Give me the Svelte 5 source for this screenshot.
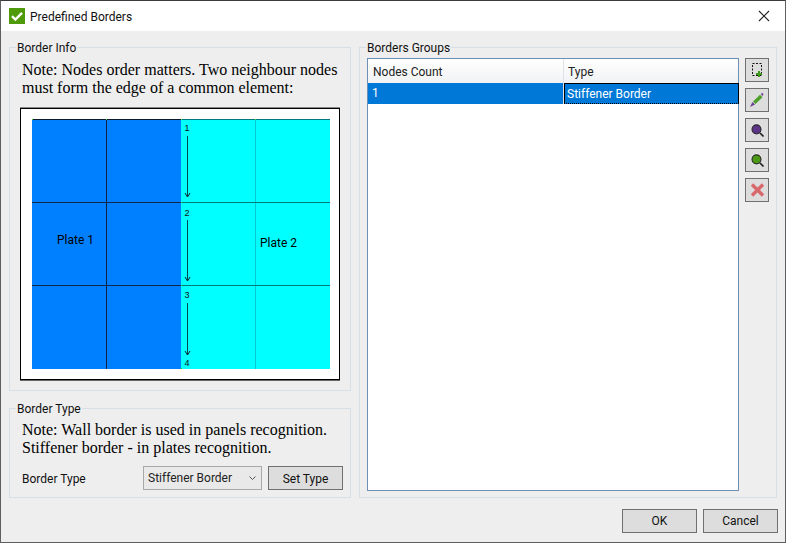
<script>
    const groups = [{ count: 1, type: "Stiffener Border" }];
    // baselines inside the picture, counted from its top edge
    const nodes = [
        { n: 1, y: 11.5 },
        { n: 2, y: 96.5 },
        { n: 3, y: 178.5 },
        { n: 4, y: 246.5 },
    ];
    const arrows = [
        [17, 78],
        [101, 162],
        [184, 236],
    ];
    const corners = [
        [0, 0], [74, 0], [149, 0], [223, 0],
        [149, 83], [149, 166], [149, 249],
    ];
</script>

<div class="window">
    <header class="titlebar">
        <svg class="app-icon" viewBox="0 0 16 16" width="16" height="16">
            <rect width="16" height="16" fill="#4f9a0a" />
            <path d="M3 8.2l3.4 3.3L13 4.8" fill="none" stroke="#fff" stroke-width="2.4" />
        </svg>
        <span class="title">Predefined Borders</span>
        <svg class="close" viewBox="0 0 12 12" width="12" height="12">
            <path d="M1 1l10 10M11 1L1 11" stroke="#222" stroke-width="1.1" fill="none" />
        </svg>
    </header>

    <main class="body">
        <div class="left">
            <fieldset class="info">
                <legend>Border Info</legend>
                <p class="note">Note: Nodes order matters. Two neighbour nodes must form the edge of a common element:</p>
                <div class="picture">
                    <svg viewBox="0 0 298 250" width="298" height="250">
                        <rect x="0" y="0" width="149" height="250" fill="#0080ff" />
                        <rect x="149" y="0" width="149" height="250" fill="#00ffff" />
                        <path d="M0 .5H149" stroke="#0a1a30" />
                        <path d="M149 .5H298" stroke="#047a80" />
                        <path d="M74.5 0V250" stroke="#10233a" />
                        <path d="M223.5 0V250" stroke="#08c8d0" />
                        <path d="M0 83.5H149M0 166.5H149" stroke="#0d2a4a" />
                        <path d="M149 83.5H298M149 166.5H298" stroke="#047a80" />
                        {#each corners as [cx, cy]}
                            <rect x={cx} y={cy} width="1" height="1" fill="#40e040" />
                        {/each}
                        {#each arrows as [a, b]}
                            <path d="M155.5 {a}V{b}" stroke="#04484c" />
                            <path d="M153 {b - 4}l2.5 4 2.5-4" fill="none" stroke="#04282c" />
                        {/each}
                        {#each nodes as node}
                            <text class="node" x="155" y={node.y}>{node.n}</text>
                        {/each}
                        <text class="plate" x="25" y="125">Plate 1</text>
                        <text class="plate" x="228" y="128">Plate 2</text>
                    </svg>
                </div>
            </fieldset>

            <fieldset class="type">
                <legend>Border Type</legend>
                <p class="note">Note: Wall border is used in panels recognition. Stiffener border - in plates recognition.</p>
                <div class="type-row">
                    <span class="label">Border Type</span>
                    <div class="combo">
                        <span>Stiffener Border</span>
                        <svg viewBox="0 0 7 4" width="7" height="4">
                            <path d="M.5 .5l3 3 3-3" fill="none" stroke="#555" />
                        </svg>
                    </div>
                    <button class="btn set">Set Type</button>
                </div>
            </fieldset>
        </div>

        <fieldset class="groups">
            <legend>Borders Groups</legend>
            <div class="groups-inner">
                <div class="table">
                    <div class="thead">
                        <div class="th first">Nodes Count</div>
                        <div class="th">Type</div>
                    </div>
                    {#each groups as g}
                        <div class="tr">
                            <div class="td first">{g.count}</div>
                            <div class="td current">{g.type}</div>
                        </div>
                    {/each}
                </div>
                <div class="tools">
                    <button class="tool" aria-label="Add">
                        <svg viewBox="0 0 16 16" width="16" height="16">
                            <rect x="3.5" y="1.5" width="9" height="12" fill="none" stroke="#111" stroke-dasharray="2 1.5" />
                            <path d="M10 9v6M7 12h6" stroke="#3f9a1e" stroke-width="2" />
                        </svg>
                    </button>
                    <button class="tool" aria-label="Edit">
                        <svg viewBox="0 0 16 16" width="16" height="16">
                            <path d="M4 9.500L11 2.700l2.500 2.500L6.500 12z" fill="#4fa02a" />
                            <path d="M11.800 2l1-.8c.5-.3 1-.2 1.300.2.300.4.400.9.100 1.300l-.8 1.500z" fill="#7a4a9a" />
                            <path d="M3.500 10l2.500 2.500-5 2.500z" fill="#6a3f8f" />
                        </svg>
                    </button>
                    <button class="tool" aria-label="Zoom selected">
                        <svg viewBox="0 0 16 16" width="16" height="16">
                            <circle cx="7.500" cy="7.300" r="5.800" fill="#f4f4f4" opacity=".7" />
                            <circle cx="7.500" cy="7.300" r="4.500" fill="#5e3488" stroke="#2a2a2a" stroke-width="1.200" />
                            <path d="M11 11l3.500 3.500" stroke="#222" stroke-width="1.700" />
                        </svg>
                    </button>
                    <button class="tool" aria-label="Zoom all">
                        <svg viewBox="0 0 16 16" width="16" height="16">
                            <circle cx="7.500" cy="7.300" r="5.800" fill="#f4f4f4" opacity=".7" />
                            <circle cx="7.500" cy="7.300" r="4.500" fill="#4a9a16" stroke="#2a2a2a" stroke-width="1.200" />
                            <path d="M11 11l3.500 3.500" stroke="#222" stroke-width="1.700" />
                        </svg>
                    </button>
                    <button class="tool" aria-label="Delete">
                        <svg viewBox="0 0 16 16" width="16" height="16">
                            <path d="M3 2.500l11 11M14 2.500l-11 11" stroke="#d9686c" stroke-width="3.400" />
                        </svg>
                    </button>
                </div>
            </div>
        </fieldset>
    </main>

    <footer class="footer">
        <button class="btn wide">OK</button>
        <button class="btn wide">Cancel</button>
    </footer>
</div>

<style>
    :global(body) {
        margin: 0;
    }

    .window {
        box-sizing: border-box;
        width: 786px;
        height: 543px;
        background: #eeeeee;
        border: 1px solid #5f5f5f;
        border-top-color: #3a3a3a;
        font-family: Roboto, sans-serif;
        font-size: 12px;
        color: #111;
        display: flex;
        flex-direction: column;
    }

    .titlebar {
        height: 30px;
        background: #fff;
        display: flex;
        align-items: center;
        padding: 0 15px 0 8px;
        flex: none;
    }

    .title {
        margin-left: 5px;
        padding-top: 1px;
        flex: 1;
    }

    .body {
        display: flex;
        gap: 8px;
        padding: 9px 8px 0 8px;
        height: 468px;
        flex: none;
        box-sizing: border-box;
    }

    .left {
        width: 342px;
        display: flex;
        flex-direction: column;
        gap: 10px;
    }

    fieldset {
        margin: 0;
        padding: 0;
        min-width: 0;
        border: 1px solid #d5dfe5;
        box-sizing: border-box;
    }

    legend {
        margin-left: -6px;
        padding: 0 1px;
        height: 14px;
        line-height: 16px;
    }

    .groups legend {
        margin-left: -1px;
    }

    .note {
        margin: 0;
        font-family: "Liberation Serif", serif;
        font-size: 16px;
        line-height: 18px;
        color: #000;
    }

    .info {
        height: 351px;
        padding: 7px 8px 0 12px;
    }

    .picture {
        box-sizing: border-box;
        width: 320px;
        height: 272px;
        margin-top: 11px;
        margin-left: -2px;
        background: #fff;
        border: 1px solid #000;
        box-shadow: 0 -1px 0 #888, 0 1px 0 #666;
        padding: 10px 0 0 11px;
    }

    .picture svg {
        display: block;
    }

    .node {
        font-family: "Liberation Sans", sans-serif;
        font-size: 9px;
        text-anchor: middle;
        fill: #111;
    }

    .plate {
        font-family: Roboto, sans-serif;
        font-size: 12px;
        fill: #000;
    }

    .type {
        height: 97px;
        padding: 6px 7px 0 12px;
    }

    .type-row {
        display: flex;
        align-items: center;
        margin-top: 9px;
    }

    .label {
        width: 121px;
        padding-top: 2px;
    }

    .combo {
        box-sizing: border-box;
        width: 119px;
        height: 24px;
        border: 1px solid #a9a9a9;
        background: #e9e9e9;
        display: flex;
        align-items: center;
        justify-content: space-between;
        padding: 0 5px 0 4px;
        margin-right: 6px;
        color: #222;
    }

    .btn {
        box-sizing: border-box;
        height: 24px;
        background: #dddddd;
        border: 1px solid #707070;
        font: inherit;
        color: #111;
        padding: 0;
    }

    .set {
        width: 75px;
        padding-top: 1px;
    }

    .groups {
        width: 418px;
        height: 458px;
        padding: 0 6px 0 7px;
    }

    .groups-inner {
        display: flex;
        gap: 6px;
        margin-top: 4px;
    }

    .table {
        box-sizing: border-box;
        width: 372px;
        height: 433px;
        background: #fff;
        border: 1px solid #6d8fb3;
    }

    .thead {
        display: flex;
        height: 24px;
        background: linear-gradient(#ffffff, #f1f2f4);
    }

    .th {
        flex: 1;
        padding: 6px 0 0 4px;
        color: #222;
    }

    .th.first,
    .td.first {
        width: 196px;
        flex: none;
        box-sizing: border-box;
        border-right: 1px solid #dfe3e8;
    }

    .th.first {
        padding-left: 5px;
    }

    .tr {
        display: flex;
        height: 21px;
        background: #0078d7;
        color: #fff;
        line-height: 21px;
    }

    .td.first {
        padding-left: 4px;
    }

    .td.current {
        flex: 1;
        padding-left: 2px;
        border: 1px solid #000;
        border-bottom-style: dotted;
        margin-right: -1px;
        line-height: 20px;
    }

    .tools {
        display: flex;
        flex-direction: column;
        gap: 6px;
    }

    .tool {
        box-sizing: border-box;
        width: 24px;
        height: 24px;
        padding: 0;
        background: #dddddd;
        border: 1px solid #707070;
        display: flex;
        align-items: center;
        justify-content: center;
    }

    .footer {
        display: flex;
        justify-content: flex-end;
        gap: 6px;
        padding: 10px 7px 0 0;
    }

    .wide {
        width: 75px;
    }

    .close {
        flex: none;
    }

    .app-icon {
        flex: none;
    }
</style>
